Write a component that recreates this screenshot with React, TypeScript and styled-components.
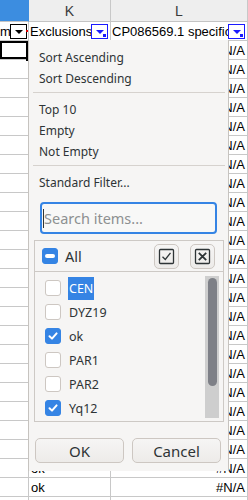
import React from 'react'
import styled, { createGlobalStyle, css } from 'styled-components'

const GlobalStyle = createGlobalStyle`
  html, body {
    margin: 0;
    padding: 0;
    background: #ffffff;
  }
  body {
    overflow: hidden;
  }
`

const COLS = '29px 82px 137px'
const UI_FONT = `"Noto Sans", "DejaVu Sans", sans-serif`

const Sheet = styled.div`
  position: relative;
  width: 248px;
  height: 500px;
  overflow: hidden;
  background: #ffffff;
  font-family: "Liberation Sans", Arial, sans-serif;
  font-size: 13px;
  color: #000000;
`

const HeaderRow = styled.div`
  display: grid;
  grid-template-columns: ${COLS};
  height: 22px;
`

const ColHead = styled.div<{ $selected?: boolean }>`
  box-sizing: border-box;
  display: flex;
  align-items: center;
  justify-content: center;
  background: ${p => (p.$selected ? '#3c8de0' : '#eeeeee')};
  border-right: 1px solid ${p => (p.$selected ? '#3c8de0' : '#c8c8c8')};
  border-bottom: 1px solid #c4c4c4;
  color: #3a3a3a;
  font-size: 14px;
`

const Row = styled.div`
  display: grid;
  grid-template-columns: ${COLS};
  height: 19px;
`

const Cell = styled.div<{ $align?: 'left' | 'right'; $selected?: boolean }>`
  position: relative;
  box-sizing: border-box;
  display: flex;
  align-items: center;
  justify-content: ${p => (p.$align === 'right' ? 'flex-end' : 'flex-start')};
  padding: 0 2px;
  border-right: 1px solid #c8c8c8;
  border-bottom: 1px solid #c8c8c8;
  white-space: nowrap;
  overflow: hidden;
  ${p =>
    p.$selected &&
    css`
      overflow: visible;
      z-index: 1;
      box-shadow: inset 0 0 0 2px #000000;
      &::after {
        content: '';
        position: absolute;
        right: -2px;
        bottom: -2px;
        width: 4px;
        height: 4px;
        background: #000000;
      }
    `}
`

const FilterCell = styled(Cell)<{ $tight?: boolean }>`
  padding: ${p => (p.$tight ? '0 1px 0 0' : '0 2px 0 1px')};
`

const CellText = styled.span`
  flex: 1;
  min-width: 0;
  overflow: hidden;
  white-space: nowrap;
`

const FilterButton = styled.div<{ $active?: boolean }>`
  position: relative;
  flex: none;
  box-sizing: border-box;
  width: 17px;
  height: 15px;
  display: flex;
  align-items: center;
  justify-content: center;
  background: #ffffff;
  border: 1px solid ${p => (p.$active ? '#1a1aff' : '#000000')};
  &::before {
    content: '';
    border-left: 4px solid transparent;
    border-right: 4px solid transparent;
    border-top: 4px solid ${p => (p.$active ? '#1a1aff' : '#000000')};
    margin-top: 1px;
  }
  ${p =>
    p.$active &&
    css`
      &::after {
        content: '';
        position: absolute;
        right: 1px;
        bottom: 1px;
        width: 3px;
        height: 3px;
        background: #1a1aff;
      }
    `}
`

const RedMark = styled.span`
  position: absolute;
  right: 0;
  top: 8px;
  width: 2px;
  height: 2px;
  background: #e00000;
`

/* ---------- autofilter popup ---------- */

const Popup = styled.div`
  position: absolute;
  left: 28px;
  top: 40px;
  width: 201px;
  height: 431px;
  box-sizing: border-box;
  border: 1px solid #c6c3bf;
  border-top: none;
  border-bottom: none;
  background: #f6f5f4;
  padding-top: 7px;
  font-family: ${UI_FONT};
  color: #2e3436;
  z-index: 2;
`

const MenuItem = styled.div`
  height: 21px;
  display: flex;
  align-items: center;
  padding-left: 10px;
  font-size: 12px;
`

const Separator = styled.div`
  height: 1px;
  background: #d6d2ce;
  margin: 3px 3px 6px 4px;
`

const SearchBox = styled.div`
  box-sizing: border-box;
  height: 32px;
  margin: 9px 11px 0 11px;
  border: 2px solid #3584e4;
  border-radius: 4px;
  background: #f8f8f7;
  display: flex;
  align-items: center;
  padding-left: 1px;
  font-size: 14.5px;
  color: #8d9091;
`

const Caret = styled.span`
  width: 1px;
  height: 19px;
  background: #2e3436;
`

const ListBox = styled.div`
  box-sizing: border-box;
  width: 190px;
  height: 182px;
  margin: 6px 0 0 5px;
  border: 1px solid #cdc9c5;
  display: flex;
  flex-direction: column;
`

const ListHeader = styled.div`
  height: 31px;
  flex: none;
  box-sizing: border-box;
  border-bottom: 1px solid #cdc9c5;
  display: flex;
  align-items: center;
  padding: 0 8px 0 7px;
`

const AllLabel = styled.span`
  margin-left: 7px;
  font-size: 14.5px;
`

const ToolButtons = styled.div`
  margin-left: auto;
  display: flex;
  gap: 11px;
`

const ToolButton = styled.div`
  box-sizing: border-box;
  width: 25px;
  height: 25px;
  border: 1px solid #cdc7c2;
  border-radius: 5px;
  background: linear-gradient(#f6f5f4, #edebe9);
  display: flex;
  align-items: center;
  justify-content: center;
`

const ListBody = styled.div`
  flex: 1;
  display: flex;
  min-height: 0;
`

const Items = styled.div`
  flex: 1;
  padding-top: 4px;
`

const Item = styled.div`
  height: 24px;
  display: flex;
  align-items: center;
  padding-left: 10px;
  font-size: 12.5px;
`

const ItemLabel = styled.span<{ $highlight?: boolean }>`
  margin-left: 7px;
  height: 23px;
  display: flex;
  align-items: center;
  padding: 0 1px;
  ${p =>
    p.$highlight &&
    css`
      background: #3584e4;
      color: #ffffff;
    `}
`

const Check = styled.div<{ $state: 'on' | 'off' | 'mixed' }>`
  box-sizing: border-box;
  flex: none;
  width: 16px;
  height: 16px;
  border-radius: 3px;
  display: flex;
  align-items: center;
  justify-content: center;
  background: ${p => (p.$state === 'off' ? '#ffffff' : '#3584e4')};
  border: 1px solid ${p => (p.$state === 'off' ? '#cdc7c2' : '#3584e4')};
`

const MixedBar = styled.span`
  width: 10px;
  height: 4px;
  border-radius: 2px;
  background: #ffffff;
`

const Trough = styled.div`
  flex: none;
  width: 14px;
  margin: 4px 4px 3px 0;
  background: #cecece;
  display: flex;
  justify-content: center;
  padding-top: 2px;
  box-sizing: border-box;
`

const Thumb = styled.div`
  width: 9px;
  height: 108px;
  border-radius: 5px;
  background: #7e8087;
`

const ButtonRow = styled.div`
  display: flex;
  gap: 8px;
  margin: 16px 0 0 6px;
`

const PushButton = styled.div`
  box-sizing: border-box;
  width: 89px;
  height: 25px;
  border: 1px solid #cdc7c2;
  border-radius: 5px;
  background: linear-gradient(#f6f5f4, #edebe9);
  display: flex;
  align-items: center;
  justify-content: center;
  font-size: 15px;
  color: #2e3436;
`

const CheckMark = () => (
  <svg width="12" height="12" viewBox="0 0 12 12">
    <path d="M2.5 6.2 L5 8.6 L9.6 3.4" stroke="#ffffff" strokeWidth="2" fill="none" strokeLinecap="round" strokeLinejoin="round" />
  </svg>
)

const SelectAllIcon = () => (
  <svg width="17" height="17" viewBox="0 0 17 17">
    <rect x="1.5" y="1.5" width="14" height="14" rx="1" stroke="#2e3436" strokeWidth="1.3" fill="none" />
    <path d="M4.5 8.8 L7.3 11.5 L12.5 4.8" stroke="#2e3436" strokeWidth="1.3" fill="none" />
  </svg>
)

const ClearAllIcon = () => (
  <svg width="17" height="17" viewBox="0 0 17 17">
    <rect x="1.5" y="1.5" width="14" height="14" rx="1" stroke="#2e3436" strokeWidth="1.3" fill="none" />
    <path d="M4.8 4.8 L12.2 12.2 M12.2 4.8 L4.8 12.2" stroke="#2e3436" strokeWidth="1.8" fill="none" />
  </svg>
)

const values = [
  { name: 'CEN', state: 'off' as const, highlight: true },
  { name: 'DYZ19', state: 'off' as const },
  { name: 'ok', state: 'on' as const },
  { name: 'PAR1', state: 'off' as const },
  { name: 'PAR2', state: 'off' as const },
  { name: 'Yq12', state: 'on' as const },
]

const ROW_COUNT = 25

export default function App() {
  const rows = Array.from({ length: ROW_COUNT }, (_, i) => i)
  return (
    <>
      <GlobalStyle />
      <Sheet>
        <HeaderRow>
          <ColHead $selected />
          <ColHead>K</ColHead>
          <ColHead>L</ColHead>
        </HeaderRow>
        <Row>
          <FilterCell $tight>
            <CellText>m</CellText>
            <FilterButton />
            <RedMark />
          </FilterCell>
          <FilterCell>
            <CellText>Exclusions</CellText>
            <FilterButton $active />
          </FilterCell>
          <FilterCell>
            <CellText>CP086569.1 specific</CellText>
            <FilterButton $active />
          </FilterCell>
        </Row>
        {rows.map(i => (
          <Row key={i}>
            <Cell $selected={i === 0} />
            <Cell>{i === 22 || i === 23 ? 'ok' : ''}</Cell>
            <Cell $align="right">{i < 24 ? '#N/A' : ''}</Cell>
          </Row>
        ))}

        <Popup>
          <MenuItem>Sort Ascending</MenuItem>
          <MenuItem>Sort Descending</MenuItem>
          <Separator />
          <MenuItem>Top 10</MenuItem>
          <MenuItem>Empty</MenuItem>
          <MenuItem>Not Empty</MenuItem>
          <Separator />
          <MenuItem>Standard Filter...</MenuItem>
          <SearchBox>
            <Caret />
            Search items...
          </SearchBox>
          <ListBox>
            <ListHeader>
              <Check $state="mixed">
                <MixedBar />
              </Check>
              <AllLabel>All</AllLabel>
              <ToolButtons>
                <ToolButton>
                  <SelectAllIcon />
                </ToolButton>
                <ToolButton>
                  <ClearAllIcon />
                </ToolButton>
              </ToolButtons>
            </ListHeader>
            <ListBody>
              <Items>
                {values.map(v => (
                  <Item key={v.name}>
                    <Check $state={v.state}>{v.state === 'on' && <CheckMark />}</Check>
                    <ItemLabel $highlight={v.highlight}>{v.name}</ItemLabel>
                  </Item>
                ))}
              </Items>
              <Trough>
                <Thumb />
              </Trough>
            </ListBody>
          </ListBox>
          <ButtonRow>
            <PushButton>OK</PushButton>
            <PushButton>Cancel</PushButton>
          </ButtonRow>
        </Popup>
      </Sheet>
    </>
  )
}
